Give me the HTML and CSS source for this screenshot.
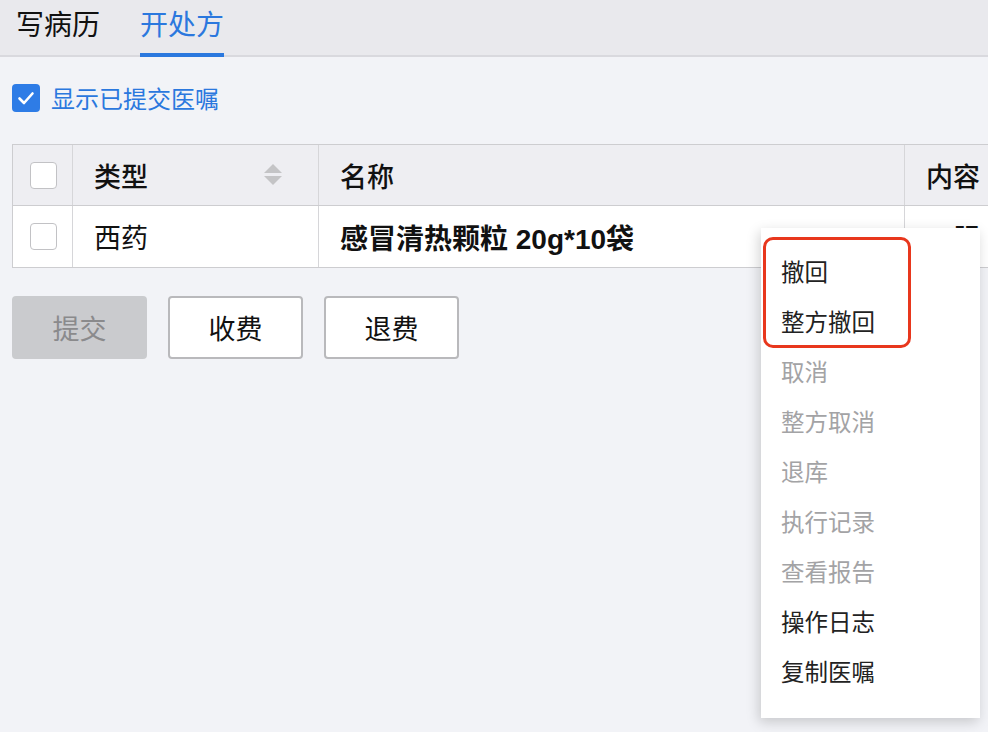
FILE: index.html
```html
<!DOCTYPE html>
<html lang="zh">
<head>
<meta charset="utf-8">
<link rel="stylesheet" href="styles.css">
</head>
<body>
<div class="page">
  <div class="tabbar">
    <div class="tab">写病历</div>
    <div class="tab active">开处方</div>
  </div>
  <div class="content">
    <label class="show-row">
      <span class="cb-checked">
        <svg viewBox="0 0 28 28" width="28" height="28"><path d="M7.5 14.5 L12 19 L20.5 9.5" fill="none" stroke="#fff" stroke-width="2.6" stroke-linecap="round" stroke-linejoin="round"/></svg>
      </span>
      <span class="show-text">显示已提交医嘱</span>
    </label>

    <div class="table">
      <div class="row head">
        <div class="cell c-cb"><span class="cb"></span></div>
        <div class="cell c-type">类型
          <svg class="sort" viewBox="0 0 20 24" width="20" height="24"><path d="M10 1 L19 10 L1 10 Z" fill="#c4c4c6"/><path d="M1 13 L19 13 L10 22 Z" fill="#c4c4c6"/></svg>
        </div>
        <div class="cell c-name">名称</div>
        <div class="cell c-content">内容</div>
      </div>
      <div class="row body">
        <div class="cell c-cb"><span class="cb"></span></div>
        <div class="cell c-type">西药</div>
        <div class="cell c-name bold">感冒清热颗粒 20g*10袋</div>
        <div class="cell c-content">口服</div>
      </div>
    </div>

    <div class="buttons">
      <button class="btn disabled">提交</button>
      <button class="btn">收费</button>
      <button class="btn">退费</button>
    </div>
  </div>

  <div class="menu">
    <div class="item">撤回</div>
    <div class="item">整方撤回</div>
    <div class="item off">取消</div>
    <div class="item off">整方取消</div>
    <div class="item off">退库</div>
    <div class="item off">执行记录</div>
    <div class="item off">查看报告</div>
    <div class="item">操作日志</div>
    <div class="item">复制医嘱</div>
  </div>
  <div class="highlight"></div>
</div>
</body>
</html>
```

FILE: styles.css
```css
* { box-sizing: border-box; }
html, body {
  margin: 0;
  padding: 0;
  width: 988px;
  height: 732px;
  overflow: hidden;
  background: #f2f3f7;
  font-family: "Noto Sans CJK SC", "Noto Sans", sans-serif;
}
.page {
  position: relative;
  width: 988px;
  height: 732px;
  overflow: hidden;
}
.tabbar {
  height: 57px;
  background: #e9e9ed;
  border-bottom: 2px solid #d9d9de;
  display: flex;
  padding-left: 16px;
  gap: 40px;
}
.tab {
  font-size: 28px;
  line-height: 46px;
  color: #111;
  height: 55px;
  position: relative;
}
.tab.active {
  color: #2b78de;
}
.tab.active::after {
  content: "";
  position: absolute;
  left: 0;
  right: 0;
  bottom: -2px;
  height: 4px;
  background: #2b78de;
}
.content {
  padding: 27px 0 0 12px;
}
.show-row {
  display: flex;
  align-items: center;
  gap: 11px;
  height: 28px;
}
.cb-checked {
  width: 28px;
  height: 28px;
  border-radius: 4px;
  background: #2e7ce6;
  display: block;
}
.cb-checked svg { display: block; }
.show-text {
  font-size: 24px;
  color: #2b78de;
  line-height: 28px;
}
.table {
  margin-top: 32px;
  width: 1160px;
  border: 1px solid #cdcdd0;
  border-right: none;
}
.row {
  display: grid;
  grid-template-columns: 60px 246px 586px 268px;
}
.row.head {
  height: 61px;
  background: #eeeef2;
  border-bottom: 1px solid #cdcdd0;
}
.row.body {
  height: 61px;
  background: #fff;
}
.cell {
  font-size: 27px;
  color: #111;
  display: flex;
  align-items: center;
  padding-left: 21px;
  border-right: 1px solid #d6d6d9;
  position: relative;
}
.row.head .cell { font-weight: 500; }
.cell.bold {
  font-weight: 700;
  font-size: 28px;
  font-family: "Liberation Sans", "Noto Sans CJK SC", sans-serif;
}
.c-cb {
  padding-left: 17px;
}
.cb {
  display: block;
  width: 27px;
  height: 27px;
  border: 1.5px solid #c2c2c5;
  border-radius: 4px;
  background: #fff;
}
.sort {
  position: absolute;
  right: 35px;
  top: 18px;
}
.buttons {
  margin-top: 28px;
  display: flex;
  gap: 21px;
}
.btn {
  width: 135px;
  height: 63px;
  font-family: "Noto Sans CJK SC", sans-serif;
  font-size: 27px;
  color: #111;
  background: #fff;
  border: 2px solid #b9b9bc;
  border-radius: 4px;
  padding: 0;
}
.btn.disabled {
  background: #cacbce;
  border-color: #cacbce;
  color: #8a8a8c;
}
.menu {
  position: absolute;
  left: 761px;
  top: 228px;
  width: 219px;
  height: 490px;
  background: #fff;
  box-shadow: -2px 4px 12px rgba(0,0,0,0.18);
  padding-top: 18px;
}
.item {
  height: 50px;
  line-height: 50px;
  padding-left: 20px;
  font-size: 23.5px;
  color: #222;
}
.item.off {
  color: #a3a3a5;
}
.highlight {
  position: absolute;
  left: 763px;
  top: 237px;
  width: 148px;
  height: 111px;
  border: 3.5px solid #e8371d;
  border-radius: 10px;
}
```
